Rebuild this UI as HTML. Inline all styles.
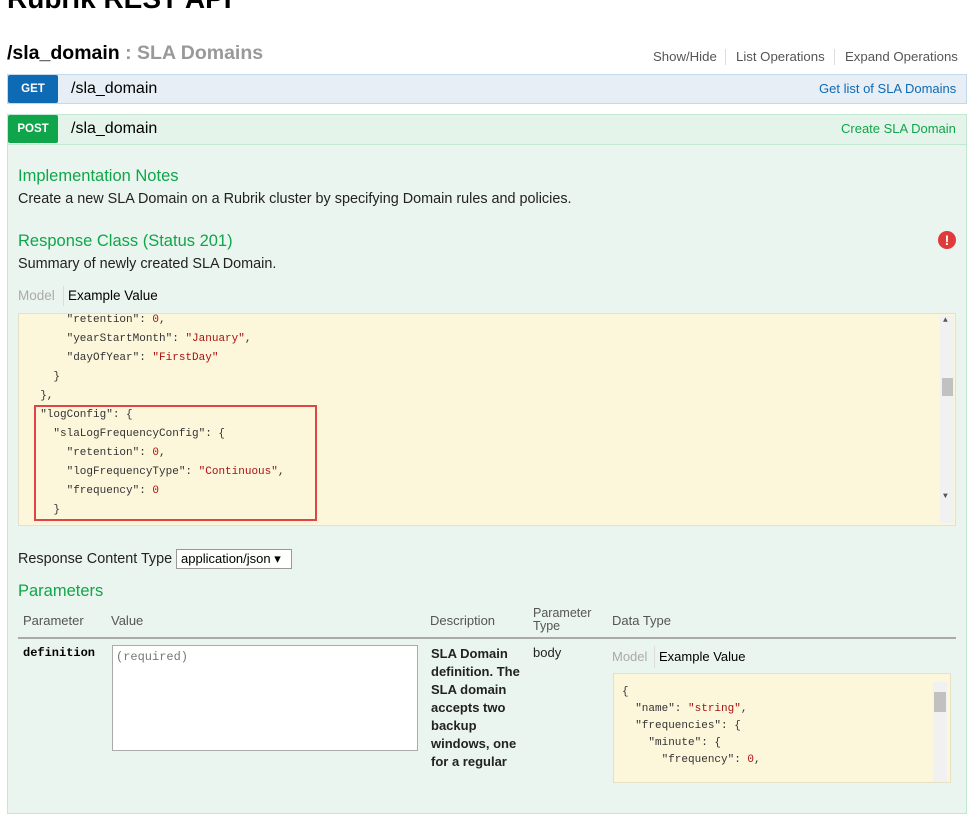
<!DOCTYPE html>
<html><head><meta charset="utf-8"><style>
*{box-sizing:border-box;margin:0;padding:0}
body{width:970px;height:768px;overflow:hidden;background:#fff;font-family:"Liberation Sans",sans-serif;position:relative;color:#333}
.a{position:absolute;white-space:nowrap}
.mono{font-family:"Liberation Mono",monospace}
.code{font-family:"Liberation Mono",monospace;font-size:11px;color:#333}
.code div{white-space:pre;padding-left:8px}
.s{color:#a11}
</style></head><body>
<div class="a" style="left:7px;top:-17px;font-size:28px;font-weight:bold;color:#000">Rubrik REST API</div>
<div class="a" style="left:7px;top:42px;font-size:19.5px;font-weight:bold;color:#000">/sla_domain <span style="color:#999">: SLA Domains</span></div>
<div class="a" style="left:653px;top:49px;font-size:13.2px;color:#555">Show/Hide</div>
<div class="a" style="left:725px;top:49px;width:1px;height:16px;background:#ddd"></div>
<div class="a" style="left:736px;top:49px;font-size:13.2px;color:#555">List Operations</div>
<div class="a" style="left:834px;top:49px;width:1px;height:16px;background:#ddd"></div>
<div class="a" style="left:845px;top:49px;font-size:13.2px;color:#555">Expand Operations</div>

<div class="a" style="left:7px;top:74px;width:960px;height:30px;background:#e7eef6;border:1px solid #c3d9ec"></div>
<div class="a" style="left:8px;top:75px;width:50px;height:28px;background:#0f6ab4;border-radius:2px;color:#fff;font-size:11.5px;font-weight:bold;text-align:center;line-height:28px">GET</div>
<div class="a" style="left:71px;top:80px;font-size:16px;color:#000">/sla_domain</div>
<div class="a" style="left:819px;top:81px;font-size:13px;color:#0f6ab4">Get list of SLA Domains</div>

<div class="a" style="left:7px;top:114px;width:960px;height:700px;background:#ebf5ef;border:1px solid #c3e8d1"></div>
<div class="a" style="left:7px;top:114px;width:960px;height:31px;background:#e5f4ea;border:1px solid #c3e8d1"></div>
<div class="a" style="left:8px;top:115px;width:50px;height:28px;background:#10a54a;border-radius:2px;color:#fff;font-size:11.5px;font-weight:bold;text-align:center;line-height:28px">POST</div>
<div class="a" style="left:71px;top:120px;font-size:16px;color:#000">/sla_domain</div>
<div class="a" style="left:841px;top:121px;font-size:13px;color:#10a54a">Create SLA Domain</div>

<div class="a" style="left:18px;top:167px;font-size:16.5px;color:#10a54a">Implementation Notes</div>
<div class="a" style="left:18px;top:191px;font-size:14.4px;color:#222">Create a new SLA Domain on a Rubrik cluster by specifying Domain rules and policies.</div>
<div class="a" style="left:18px;top:232px;font-size:16.5px;color:#10a54a">Response Class (Status 201)</div>
<div class="a" style="left:938px;top:231px;width:18px;height:18px;border-radius:50%;background:#e03b3b;color:#fff;font-weight:bold;font-size:14px;text-align:center;line-height:18px">!</div>
<div class="a" style="left:18px;top:256px;font-size:14.4px;color:#222">Summary of newly created SLA Domain.</div>
<div class="a" style="left:18px;top:288px;font-size:13.5px;color:#aaa">Model</div>
<div class="a" style="left:63px;top:286px;width:1px;height:20px;background:#ddd"></div>
<div class="a" style="left:68px;top:288px;font-size:13.5px;color:#000">Example Value</div>

<div class="a" style="left:18px;top:313px;width:938px;height:213px;background:#fcf6db;border:1px solid #e5e0c6;overflow:hidden">
<div class="a" style="left:921px;top:2px;width:14px;height:207px;background:#f1f1f1"></div>
<div class="a" style="left:923px;top:64px;width:11px;height:18px;background:#c1c1c1"></div>
<div class="a code" style="left:924px;top:2px;font-size:8px;color:#555">▲</div>
<div class="a code" style="left:924px;top:178px;font-size:8px;color:#555">▼</div>
<div class="a code" style="left:0;top:-3px;line-height:19px">
<div>      "retention": <span class="s">0</span>,</div>
<div>      "yearStartMonth": <span class="s">"January"</span>,</div>
<div>      "dayOfYear": <span class="s">"FirstDay"</span></div>
<div>    }</div>
<div>  },</div>
<div>  "logConfig": {</div>
<div>    "slaLogFrequencyConfig": {</div>
<div>      "retention": <span class="s">0</span>,</div>
<div>      "logFrequencyType": <span class="s">"Continuous"</span>,</div>
<div>      "frequency": <span class="s">0</span></div>
<div>    }</div>
</div>
</div>
<div class="a" style="left:34px;top:405px;width:283px;height:116px;border:2px solid #e04444"></div>

<div class="a" style="left:18px;top:551px;font-size:14.4px;color:#222">Response Content Type</div>
<div class="a" style="left:176px;top:549px;width:116px;height:20px;border:1px solid #999;background:#fff;font-size:13px;line-height:18px;padding-left:4px;color:#000">application/json ▾</div>
<div class="a" style="left:18px;top:582px;font-size:16.5px;color:#10a54a">Parameters</div>

<div class="a" style="left:23px;top:613px;font-size:13px;color:#555">Parameter</div>
<div class="a" style="left:111px;top:613px;font-size:13px;color:#555">Value</div>
<div class="a" style="left:430px;top:613px;font-size:13px;color:#555">Description</div>
<div class="a" style="left:533px;top:607px;font-size:12.5px;color:#555;line-height:13px">Parameter<br>Type</div>
<div class="a" style="left:612px;top:613px;font-size:13px;color:#555">Data Type</div>
<div class="a" style="left:18px;top:637px;width:938px;height:2px;background:#aaa"></div>
<div class="a mono" style="left:23px;top:646px;font-size:12px;font-weight:bold;color:#000">definition</div>
<div class="a" style="left:112px;top:645px;width:306px;height:106px;border:1px solid #aaa;background:#fff"><span class="mono" style="position:absolute;left:3px;top:4px;font-size:12px;color:#777">(required)</span></div>
<div class="a" style="left:431px;top:645px;font-size:13px;font-weight:bold;color:#222;line-height:18px">SLA Domain<br>definition. The<br>SLA domain<br>accepts two<br>backup<br>windows, one<br>for a regular</div>
<div class="a" style="left:533px;top:645px;font-size:13px;color:#222">body</div>
<div class="a" style="left:612px;top:649px;font-size:13px;color:#aaa">Model</div>
<div class="a" style="left:654px;top:646px;width:1px;height:22px;background:#ddd"></div>
<div class="a" style="left:659px;top:649px;font-size:13px;color:#000">Example Value</div>
<div class="a" style="left:613px;top:673px;width:338px;height:110px;background:#fcf6db;border:1px solid #e5e0c6">
<div class="a" style="left:319px;top:8px;width:14px;height:100px;background:#f1f1f1"></div>
<div class="a" style="left:320px;top:18px;width:12px;height:20px;background:#c1c1c1"></div>
<div class="a code" style="left:0;top:10px;font-size:11px;line-height:17px">
<div>{</div>
<div>  "name": <span class="s">"string"</span>,</div>
<div>  "frequencies": {</div>
<div>    "minute": {</div>
<div>      "frequency": <span class="s">0</span>,</div>
</div>
</div>
</body></html>
